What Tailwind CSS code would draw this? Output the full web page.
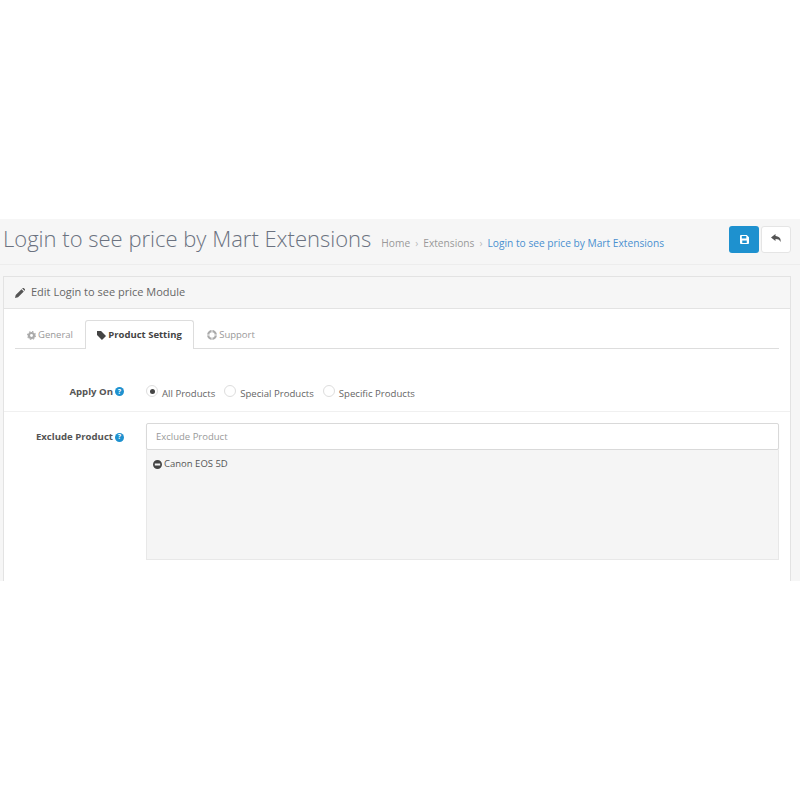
<!DOCTYPE html>
<html lang="en">
<head>
    <meta charset="UTF-8">
    <title>Login to see price by Mart Extensions</title>
    <script src="https://cdn.jsdelivr.net/npm/@tailwindcss/browser@4"></script>
</head>
<body class="bg-white font-['Open_Sans',sans-serif] text-[#666]">
    <div class="h-[219px]"></div>
    <div class="h-[362px] overflow-hidden bg-[#f6f6f6]">
        <!-- page header -->
        <div class="flex h-[46px] items-center border-b border-[#ededed] pl-[3px] pr-[9px]">
            <h1 class="-mt-[8px] text-[22px] leading-[40px] font-light text-[#6b7280] whitespace-nowrap">Login to see price by Mart Extensions</h1>
            <div class="ml-[10px] mt-[5px] flex items-center text-[10.200px] text-[#999] whitespace-nowrap">
                <span>Home</span>
                <span class="mx-[5px] text-[#bbb]">›</span>
                <span>Extensions</span>
                <span class="mx-[5px] text-[#bbb]">›</span>
                <span class="text-[#4a90d0]">Login to see price by Mart Extensions</span>
            </div>
            <div class="-mt-[5px] ml-auto flex gap-[2px]">
                <button class="flex h-[27px] w-[30px] items-center justify-center rounded-[3px] bg-[#1e91cf]">
                    <svg width="9" height="9" viewBox="0 0 10 10"><path fill="#fff" d="M0 1a1 1 0 0 1 1-1h6.500L10 2.500V9a1 1 0 0 1-1 1H1a1 1 0 0 1-1-1zM2 1v3h5V1zM2.500 6v3h5V6z"/></svg>
                </button>
                <button class="flex h-[27px] w-[30px] items-center justify-center rounded-[3px] border border-[#e5e5e5] bg-white">
                    <svg width="11" height="10" viewBox="0 0 11 10"><path fill="#555" d="M4.500 0 0 3.500 4.500 7V5c2.500 0 4 .6 5 3 .8-3.500-1-5.500-5-6z"/></svg>
                </button>
            </div>
        </div>

        <!-- panel -->
        <div class="ml-[3px] mt-[11px] h-[320px] w-[788px] border-x border-t border-[#e3e3e3] bg-white">
            <div class="flex h-[32px] items-center gap-[6px] border-b border-[#e3e3e3] bg-[#f6f6f6] pl-[11px] text-[11px] text-[#666]">
                <svg width="10" height="10" viewBox="0 0 10 10"><path fill="#555" d="M0 10l.7-3L6.500 1.200l2.300 2.300L3 9.300zM7.200.5l.5-.5a.8.8 0 0 1 1 0l1.300 1.300a.8.8 0 0 1 0 1l-.5.5z"/></svg>
                <span>Edit Login to see price Module</span>
            </div>
            <div class="px-[11px] pt-[11px]">
                <!-- tabs -->
                <div class="flex h-[29px] border-b border-[#ddd] pt-[2px] text-[9.500px]">
                    <div class="flex w-[70px] items-center justify-center gap-[2px] text-[#999]">
                        <svg width="9" height="9" viewBox="0 0 10 10"><circle cx="5" cy="5" r="2.800" fill="none" stroke="#aaa" stroke-width="2.400"/><circle cx="5" cy="5" r="4.400" fill="none" stroke="#aaa" stroke-width="1.200" stroke-dasharray="1.730 1.730"/></svg>
                        <span>General</span>
                    </div>
                    <div class="-mb-px -mt-[2px] flex w-[109px] items-center justify-center gap-[2px] rounded-t-[3px] border border-b-0 border-[#ddd] bg-white pt-px font-bold text-[#444]">
                        <svg width="9" height="9" viewBox="0 0 10 10"><path fill="#444" d="M0 0h4.500L10 5.500 5.500 10 0 4.500z"/></svg>
                        <span>Product Setting</span>
                    </div>
                    <div class="flex w-[74px] items-center justify-center gap-[2px] text-[#999]">
                        <svg width="10" height="10" viewBox="0 0 10 10"><circle cx="5" cy="5" r="3.800" fill="none" stroke="#aaa" stroke-width="2.200"/><path stroke="#f2f2f2" d="M5 0v2.500M5 7.500V10M0 5h2.500M7.500 5H10"/></svg>
                        <span>Support</span>
                    </div>
                </div>

                <!-- apply on -->
                <div class="-mx-[11px] flex h-[63px] items-end border-b border-[#f0f0f0] pb-[10px]">
                    <div class="mb-[2px] flex w-[120px] items-center justify-end gap-[2px] text-[9.600px] font-bold text-[#555]">
                        <span>Apply On</span>
                        <span class="flex h-[9px] w-[9px] items-center justify-center rounded-full bg-[#1e91cf] text-[7px] font-bold text-white">?</span>
                    </div>
                    <div class="ml-[22px] flex items-center text-[9.600px] text-[#666]">
                        <span class="flex h-[12px] w-[12px] items-center justify-center rounded-full border border-[#ddd] bg-white"><span class="h-[5px] w-[5px] rounded-full bg-[#444]"></span></span>
                        <span class="ml-[4px] mr-[9px] mt-[5px]">All Products</span>
                        <span class="h-[12px] w-[12px] rounded-full border border-[#ddd] bg-white"></span>
                        <span class="ml-[4px] mr-[9px] mt-[5px]">Special Products</span>
                        <span class="h-[12px] w-[12px] rounded-full border border-[#ddd] bg-white"></span>
                        <span class="ml-[4px] mt-[5px]">Specific Products</span>
                    </div>
                </div>

                <!-- exclude product -->
                <div class="-mx-[11px] flex pt-[11px]">
                    <div class="flex h-[27px] w-[120px] items-center justify-end gap-[2px] pt-px text-[9.600px] font-bold text-[#555]">
                        <span>Exclude Product</span>
                        <span class="flex h-[9px] w-[9px] items-center justify-center rounded-full bg-[#1e91cf] text-[7px] font-bold text-white">?</span>
                    </div>
                    <div class="ml-[22px] w-[633px]">
                        <div class="flex h-[27px] items-center rounded-[2px] border border-[#d9d9d9] bg-white pl-[9px] pt-px text-[9.500px] text-[#999] shadow-[0_1px_1px_rgba(0,0,0,0.08)]">Exclude Product</div>
                        <div class="flex h-[110px] items-start gap-[2px] border-x border-b border-[#e8e8e8] bg-[#f5f5f5] pl-[6px] pt-[7px] text-[9.500px] text-[#555]">
                            <svg class="mt-[3px]" width="9" height="9" viewBox="0 0 10 10"><path fill="#444" fill-rule="evenodd" d="M5 0a5 5 0 1 1 0 10A5 5 0 0 1 5 0zM2 4v2h6V4z"/></svg>
                            <span>Canon EOS 5D</span>
                        </div>
                    </div>
                </div>
            </div>
        </div>
    </div>
</body>
</html>
